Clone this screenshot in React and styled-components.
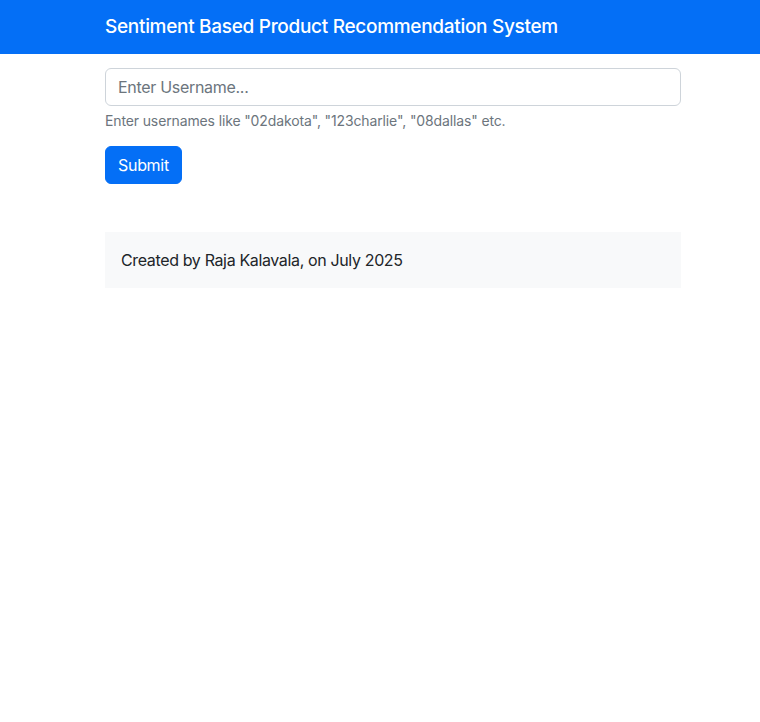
import React from "react";
import styled, { createGlobalStyle } from "styled-components";

const Global = createGlobalStyle`
  html, body { margin: 0; padding: 0; background: #fff; }
  body {
    font-family: Inter, "Noto Sans", "Liberation Sans", sans-serif;
    font-size: 16px;
    line-height: 1.5;
    color: #212529;
  }
  * { box-sizing: border-box; }
`;

const Navbar = styled.nav`
  height: 54px;
  background: #046ff6;
  display: flex;
  align-items: center;
`;

const Inner = styled.div`
  width: 576px;
  margin-left: 105px;
`;

const Brand = styled.span`
  color: #fff;
  font-size: 19px;
  font-weight: 500;
  line-height: 1.2;
  letter-spacing: -0.3px;
  margin-top: 0;
  display: block;
`;

const Main = styled(Inner)`
  padding-top: 14px;
`;

const Group = styled.div`
  margin-bottom: 15px;
`;

const Input = styled.input`
  display: block;
  width: 100%;
  height: 38px;
  padding: 6px 12px;
  font-family: inherit;
  font-size: 16px;
  letter-spacing: -0.3px;
  color: #212529;
  border: 1px solid #ced4da;
  border-radius: 6px;
  outline: none;
  &::placeholder { color: #6c757d; opacity: 1; }
`;

const Help = styled.div`
  margin-top: 4px;
  font-size: 14px;
  line-height: 21px;
  letter-spacing: -0.13px;
  color: #6c757d;
`;

const Button = styled.button`
  height: 38px;
  padding: 6px 12px;
  font-family: inherit;
  font-size: 16px;
  letter-spacing: -0.3px;
  color: #fff;
  background: #046ff6;
  border: 1px solid #046ff6;
  border-radius: 6px;
  cursor: pointer;
`;

const Footer = styled.footer`
  margin-top: 48px;
  background: #f8f9fa;
  padding: 16px;
  font-size: 16px;
  line-height: 24px;
  letter-spacing: -0.36px;
  color: #212529;
`;

export default function App() {
  return (
    <>
      <Global />
      <Navbar>
        <Inner>
          <Brand>Sentiment Based Product Recommendation System</Brand>
        </Inner>
      </Navbar>
      <Main>
        <form onSubmit={(e) => e.preventDefault()}>
          <Group>
            <Input type="text" placeholder="Enter Username..." />
            <Help>Enter usernames like "02dakota", "123charlie", "08dallas" etc.</Help>
          </Group>
          <Button type="submit">Submit</Button>
        </form>
        <Footer>Created by Raja Kalavala, on July 2025</Footer>
      </Main>
    </>
  );
}
